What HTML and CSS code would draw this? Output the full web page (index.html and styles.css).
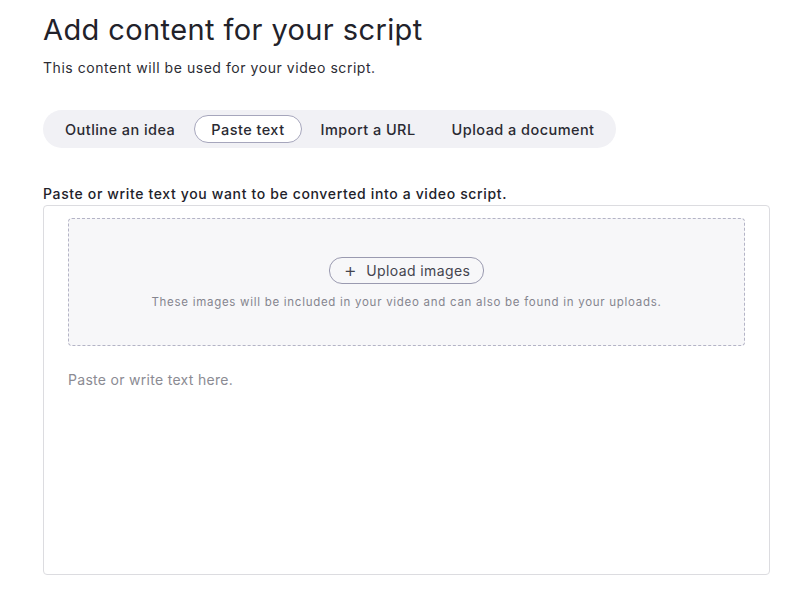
FILE: index.html
```html
<!DOCTYPE html>
<html lang="en">
<head>
  <meta charset="UTF-8">
  <meta name="viewport" content="width=device-width, initial-scale=1.0">
  <title>Add content</title>
  <link rel="stylesheet" href="styles.css">
</head>
<body>
  <div class="page">
    <h1 class="title">Add content for your script</h1>
    <p class="subtitle">This content will be used for your video script.</p>

    <div class="tabs">
      <button class="tab">Outline an idea</button>
      <button class="tab active">Paste text</button>
      <button class="tab">Import a URL</button>
      <button class="tab">Upload a document</button>
    </div>

    <label class="field-label" for="script-text">Paste or write text you want to be converted into a video script.</label>
    <div class="editor">
      <div class="dropzone">
        <button class="upload-btn"><span class="plus">+</span>Upload images</button>
        <p class="dropzone-note">These images will be included in your video and can also be found in your uploads.</p>
      </div>
      <textarea id="script-text" class="text-input" placeholder="Paste or write text here."></textarea>
    </div>
  </div>
</body>
</html>
```

FILE: styles.css
```css
body {
  margin: 0;
  background: #fff;
  color: #23232b;
  font-family: Inter, "Noto Sans", sans-serif;
}
.page {
  padding: 12px 36px 0 43px;
}
.title {
  margin: 0;
  font-size: 29px;
  font-weight: 400;
  line-height: 36px;
  letter-spacing: 0.4px;
  color: #22222a;
}
.subtitle {
  margin: 10px 0 0;
  font-size: 14px;
  line-height: 20px;
  letter-spacing: 0.55px;
  color: #2c2c34;
}
.tabs {
  display: inline-flex;
  align-items: center;
  gap: 2px;
  margin-top: 32px;
  padding: 5px 4px 5px 5px;
  background: #f1f1f5;
  border-radius: 20px;
}
.tab {
  font: inherit;
  font-size: 14.5px;
  font-weight: 500;
  letter-spacing: 0.45px;
  color: #2a2a32;
  background: none;
  border: 1px solid transparent;
  border-radius: 14px;
  padding: 0 16px;
  height: 28px;
  cursor: pointer;
}
.tab.active {
  background: #fff;
  border-color: #a6a6bc;
}
.field-label {
  display: block;
  margin-top: 36px;
  font-size: 14px;
  font-weight: 500;
  line-height: 20px;
  letter-spacing: 0.64px;
  color: #22222a;
}
.editor {
  box-sizing: border-box;
  margin-top: 1px;
  height: 370px;
  border: 1px solid #dcdce0;
  border-radius: 4px;
  padding: 12px 24px;
  display: flex;
  flex-direction: column;
}
.dropzone {
  box-sizing: border-box;
  height: 128px;
  flex: none;
  background: #f7f7f9;
  border: 1px dashed #b4b4c6;
  border-radius: 4px;
  display: flex;
  flex-direction: column;
  align-items: center;
  justify-content: center;
  padding-top: 2px;
}
.upload-btn {
  display: inline-flex;
  align-items: center;
  gap: 9px;
  font: inherit;
  font-size: 14px;
  letter-spacing: 0.4px;
  color: #44444e;
  background: #fff0;
  border: 1px solid #9a9ab0;
  border-radius: 13px;
  height: 27px;
  padding: 0 13px 0 14px;
  cursor: pointer;
}
.plus {
  font-size: 20px;
  font-weight: 300;
  line-height: 1;
  margin-top: -2px;
}
.dropzone-note {
  margin: 11px 0 0;
  font-size: 11.5px;
  letter-spacing: 0.72px;
  color: #85858f;
}
.text-input {
  flex: 1;
  margin-top: 25px;
  border: none;
  outline: none;
  resize: none;
  font: inherit;
  font-size: 14px;
  letter-spacing: 0.3px;
  color: #2a2a32;
  padding: 0;
}
.text-input::placeholder {
  color: #8b8b93;
}
```
